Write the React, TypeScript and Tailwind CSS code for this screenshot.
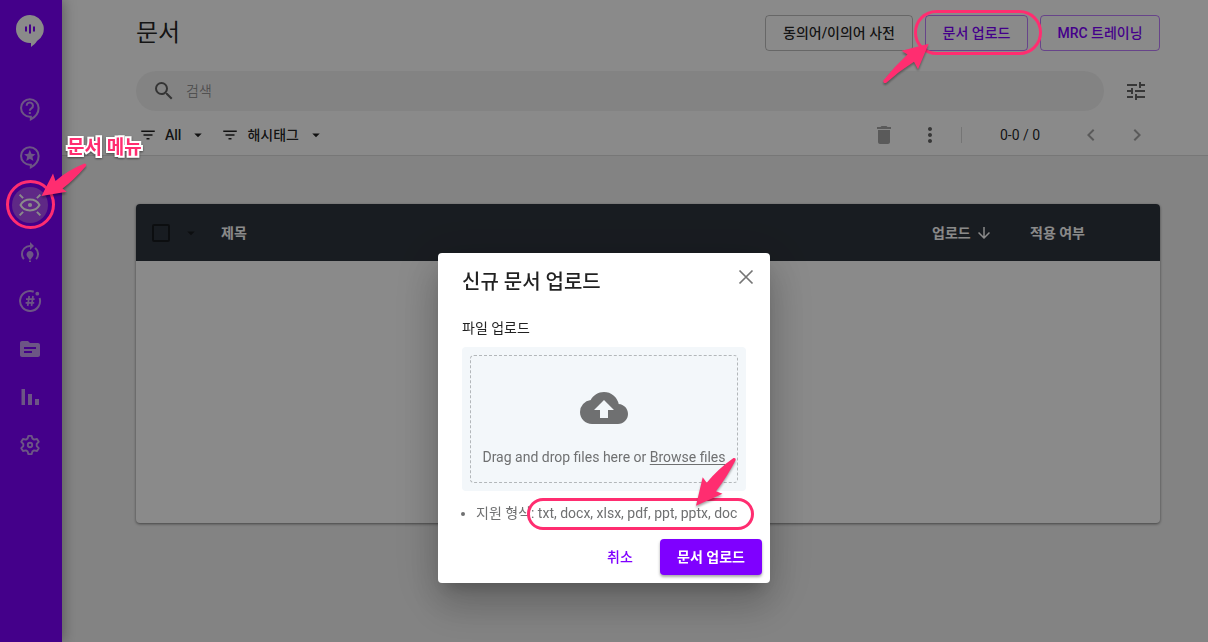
import type { ReactNode } from "react";
import {
  MdArrowDownward,
  MdArrowDropDown,
  MdChevronLeft,
  MdChevronRight,
  MdCloudUpload,
  MdDelete,
  MdFilterList,
  MdModelTraining,
  MdMoreVert,
  MdSearch,
  MdSource,
  MdTune,
} from "react-icons/md";

const BUBBLE = "M11.4 2.8a7.8 7.8 0 0 0 0 15.6h.9v2.3c4-2.1 6.9-6.2 6.9-10.1A7.8 7.8 0 0 0 11.400 2.8z";

function HelpIcon() {
  return (
    <svg viewBox="0 0 24 24" className="size-[27px]" fill="none" stroke="currentColor" strokeWidth="1.8">
      <path d={BUBBLE} />
      <path d="M8.600 8.600a2.800 2.800 0 1 1 4.300 2.300c-1 .7-1.500 1.100-1.500 2.300" />
      <path d="M10.500 14.300h1.800v1.700h-1.800z" fill="currentColor" stroke="none" />
    </svg>
  );
}

function StarIcon() {
  return (
    <svg viewBox="0 0 24 24" className="size-[27px]" fill="none" stroke="currentColor" strokeWidth="1.8">
      <path d={BUBBLE} />
      <path
        d="M11.400 5.200l1.400 3.500 3.700.3-2.800 2.400.9 3.600-3.200-1.900-3.200 1.900.9-3.600L6.300 9l3.700-.3z"
        fill="currentColor"
        stroke="none"
      />
    </svg>
  );
}

function EyeIcon() {
  return (
    <svg viewBox="0 0 24 24" className="size-6" fill="none" stroke="currentColor" strokeWidth="2">
      <path d="M2.500 12C6.500 4.800 17.500 4.800 21.500 12C17.500 19.200 6.500 19.200 2.500 12z" />
      <circle cx="12" cy="12" r="2.100" fill="currentColor" stroke="none" />
      <path d="M1.600 1.600l3.500 3.500M22.400 1.600l-3.500 3.500M1.600 22.400l3.500-3.500M22.400 22.400l-3.500-3.500" />
    </svg>
  );
}

function HashtagIcon() {
  return (
    <svg viewBox="0 0 24 24" className="size-6" fill="none" stroke="currentColor">
      <path d="M15.700 2.700A10 10 0 1 0 21.600 9" strokeWidth="2" />
      <circle cx="19.300" cy="4.700" r="1.900" fill="currentColor" stroke="none" />
      <path d="M11.200 7l-1.500 10M15 7l-1.500 10M8 10.200h8.600M7.600 13.800h8.600" strokeWidth="1.700" />
    </svg>
  );
}

function BarsIcon() {
  return (
    <svg viewBox="0 0 24 24" className="size-6" fill="currentColor">
      <rect x="3.500" y="4" width="3.500" height="16" />
      <rect x="10" y="9" width="4" height="11" />
      <rect x="17" y="14" width="4" height="6" />
    </svg>
  );
}

function GearIcon() {
  return (
    <svg viewBox="0 0 24 24" className="size-6" fill="none" stroke="currentColor" strokeWidth="1.900" strokeLinejoin="round">
      <path d="M10.400 2.900h3.200l.9 2.800 1.600.9 2.900-.6 1.700 2.800-2 2.100v2.200l2 2.100-1.700 2.800-2.900-.6-1.600.9-.9 2.800h-3.200l-.9-2.800-1.600-.9-2.900.6-1.700-2.800 2-2.100v-2.200l-2-2.100L5 6l2.900.6 1.600-.9z" />
      <circle cx="12" cy="12" r="2.200" />
    </svg>
  );
}

function Logo() {
  return (
    <svg viewBox="0 0 28 32" className="h-8 w-7" role="img" aria-label="Logo">
      <path d="M14 0a14 14 0 0 0 0 28h1v4c2.500-2 4.500-3.600 6-6A14 14 0 0 0 14 0z" fill="#fff" />
      <path d="M10 11.500v5M14 9.500v9M18 11.500v5" stroke="#7f00ff" strokeWidth="2" />
    </svg>
  );
}

type MenuItem = { name: string; icon: ReactNode; active?: boolean };

const menu: MenuItem[] = [
  { name: "도움말", icon: <HelpIcon /> },
  { name: "추천", icon: <StarIcon /> },
  { name: "문서", icon: <EyeIcon />, active: true },
  { name: "트레이닝", icon: <MdModelTraining className="size-6" /> },
  { name: "해시태그", icon: <HashtagIcon /> },
  { name: "파일", icon: <MdSource className="size-6" /> },
  { name: "통계", icon: <BarsIcon /> },
  { name: "설정", icon: <GearIcon /> },
];

function Sidebar() {
  return (
    <aside className="relative z-10 w-[62px] shrink-0 bg-[#7f00ff] pr-0.5 shadow-[2px_0_12px_rgba(0,0,0,0.3)]">
      <div className="flex h-[85px] justify-center pt-[15px]">
        <Logo />
      </div>
      <nav>
        {menu.map((item) => (
          <a key={item.name} href="#" aria-label={item.name} className="flex h-12 items-center justify-center">
            <span
              className={
                item.active
                  ? "flex size-9 items-center justify-center rounded-full bg-[#b04cf8] text-white"
                  : "flex size-9 items-center justify-center text-[#c79df5]"
              }
            >
              {item.icon}
            </span>
          </a>
        ))}
      </nav>
    </aside>
  );
}

function FilterButton({ label }: { label: string }) {
  return (
    <button className="flex items-center gap-2 font-medium text-black/87">
      <MdFilterList className="size-[18px]" />
      {label}
      <MdArrowDropDown className="size-[18px]" />
    </button>
  );
}

function Header() {
  return (
    <header className="border-b border-[#dcdcdc] bg-white pt-[15px] pr-12 pl-[74px]">
      <div className="flex h-9 items-center justify-between">
        <h1 className="text-2xl">문서</h1>
        <div className="flex gap-3 font-medium">
          <button className="h-9 w-[148px] rounded border border-black/25">동의어/이의어 사전</button>
          <button className="h-9 w-[103px] rounded border border-[#7f00ff]/50 text-[#7f00ff]">문서 업로드</button>
          <button className="h-9 w-[120px] rounded border border-[#7f00ff]/50 text-[#7f00ff]">MRC 트레이닝</button>
        </div>
      </div>

      <div className="mt-5 flex items-center gap-2">
        <label className="flex h-10 flex-1 items-center gap-2.5 rounded-full bg-[#f3f3f3] pl-4">
          <MdSearch className="size-6 text-black/60" />
          <input
            type="search"
            aria-label="검색"
            placeholder="검색"
            className="flex-1 bg-transparent outline-none placeholder:text-black/40"
          />
        </label>
        <button aria-label="필터 설정" className="flex h-10 w-12 items-center justify-center text-black/60">
          <MdTune className="size-6" />
        </button>
      </div>

      <div className="mt-1 flex h-10 items-center justify-between pl-[3px]">
        <div className="flex gap-3.5">
          <FilterButton label="All" />
          <FilterButton label="해시태그" />
        </div>
        <div className="flex items-center">
          <button aria-label="삭제" className="flex w-[46px] justify-center text-black/35">
            <MdDelete className="size-6" />
          </button>
          <button aria-label="더보기" className="flex w-[46px] justify-center text-black/60">
            <MdMoreVert className="size-6" />
          </button>
          <div className="ml-2 h-4 w-px bg-black/15" />
          <span className="w-[106px] pl-[38px]">0-0 / 0</span>
          <button aria-label="이전" className="flex w-[46px] justify-center text-black/35">
            <MdChevronLeft className="size-6" />
          </button>
          <button aria-label="다음" className="flex w-[46px] justify-center text-black/35">
            <MdChevronRight className="size-6" />
          </button>
        </div>
      </div>
    </header>
  );
}

function DocumentTable() {
  return (
    <div className="mt-12 mr-12 ml-[74px] overflow-hidden rounded bg-white shadow-[0_1px_3px_rgba(0,0,0,0.5)]">
      <table className="w-full table-fixed text-left">
        <thead className="bg-[#2e343d] text-white">
          <tr className="h-[57px]">
            <th className="w-[69px] pl-4">
              <div className="flex items-center gap-3 text-black/50">
                <input
                  type="checkbox"
                  aria-label="전체 선택"
                  className="size-[18px] appearance-none rounded-xs border-2 border-black/50"
                />
                <MdArrowDropDown className="size-[18px]" />
              </div>
            </th>
            <th className="px-4 font-bold">제목</th>
            <th className="w-[98px] pl-4 font-bold">
              <div className="flex items-center gap-1">
                업로드
                <MdArrowDownward className="size-[18px]" />
              </div>
            </th>
            <th className="w-[146px] px-4 font-bold">적용 여부</th>
          </tr>
        </thead>
        <tbody>
          <tr>
            <td colSpan={4} className="h-[262px]" />
          </tr>
        </tbody>
      </table>
    </div>
  );
}

function Arrow({ d, className }: { d: string; className: string }) {
  return (
    <svg viewBox="0 0 48 50" className={`absolute h-[50px] w-12 overflow-visible drop-shadow-[0_2px_1px_rgba(0,0,0,0.35)] ${className}`}>
      <path d={d} fill="#ff2d70" />
    </svg>
  );
}

function UploadDialog() {
  return (
    <section
      role="dialog"
      aria-label="신규 문서 업로드"
      className="relative w-[332px] rounded bg-white shadow-[0_11px_15px_-7px_rgba(0,0,0,0.2),0_24px_38px_3px_rgba(0,0,0,0.14),0_9px_46px_8px_rgba(0,0,0,0.12)]"
    >
      <div className="flex h-14 justify-between pl-6">
        <h2 className="text-xl leading-[58px] font-medium">신규 문서 업로드</h2>
        <button aria-label="닫기" className="flex size-12 items-center justify-center text-[#757575]">
          <svg viewBox="0 0 16 16" className="size-4" stroke="currentColor" strokeWidth="1.7">
            <path d="M1.500 1.500l13 13M14.500 1.500l-13 13" />
          </svg>
        </button>
      </div>

      <div className="px-6">
        <p className="h-[38px] leading-[38px]">파일 업로드</p>
        <div className="rounded bg-[#f3f7fa] p-2">
          <div className="flex h-32 flex-col items-center rounded border border-dashed border-[#b3b7ba] pt-7 text-[#6f7071]">
            <MdCloudUpload className="size-12" />
            <p className="mt-[15px] whitespace-nowrap">
              Drag and drop files here or{" "}
              <a href="#" className="underline underline-offset-2">
                Browse files
              </a>
            </p>
          </div>
        </div>
        <ul className="list-disc pl-3.5 leading-11 whitespace-nowrap text-[#6f7071]">
          <li>지원 형식: txt, docx, xlsx, pdf, ppt, pptx, doc</li>
        </ul>
      </div>

      <div className="mt-1 flex justify-end gap-2 px-2 pb-2">
        <button className="h-9 w-16 rounded font-medium text-[#7f00ff]">취소</button>
        <button className="h-9 w-[102px] rounded bg-[#7f00ff] font-bold text-white shadow-[0_2px_3px_rgba(0,0,0,0.35)]">
          문서 업로드
        </button>
      </div>

      {/* supported formats callout */}
      <div className="absolute top-[245px] left-[89px] h-8 w-[227px] rounded-full border-3 border-[#ff2d70]" />
      <Arrow
        className="top-[203px] left-[256px]"
        d="M2 49.700L8.700 21.300L12.700 26.700Q24 13 39.500 2Q42 1.500 41.700 4Q33 21 22 35.300L28.500 37.700Z"
      />
    </section>
  );
}

function Callouts() {
  return (
    <div className="pointer-events-none fixed inset-0">
      {/* sidebar menu */}
      <div className="absolute top-[180px] left-1.5 size-[49px] rounded-full border-3 border-[#ff2d70]" />
      <Arrow
        className="top-[150px] left-10"
        d="M1.500 46L13 23.500L15.500 31Q28 20 44.500 13.500Q47 13.500 46 16Q34 30 22.500 38.500L26.700 41.700Z"
      />
      <p className="absolute top-[134px] left-[67px] text-[19px] leading-7 font-bold text-[#ff2d70] [paint-order:stroke_fill] drop-shadow-[0_1px_1px_rgba(0,0,0,0.5)] [-webkit-text-stroke:4px_white]">
        문서 메뉴
      </p>

      {/* upload button */}
      <div className="absolute top-2.5 right-[166px] h-[45px] w-32 rounded-full border-3 border-[#ff2d70]" />
      <Arrow
        className="top-10 right-[278px]"
        d="M46.700 3.700L19.700 10.700L25.500 14.500Q12 27 1.300 40.500Q1 43.500 4 43Q17 31 32 21.700L36 29.300Z"
      />
    </div>
  );
}

export default function App() {
  return (
    <div className="flex min-h-screen bg-[#f3f3f3] font-['Roboto','Noto_Sans_CJK_KR',sans-serif] text-sm text-black/87">
      <Sidebar />
      <main className="min-w-0 flex-1">
        <Header />
        <DocumentTable />
      </main>

      <div className="fixed inset-0 z-20 flex items-end justify-center bg-black/46 pb-[59px]">
        <Callouts />
        <UploadDialog />
      </div>
    </div>
  );
}
